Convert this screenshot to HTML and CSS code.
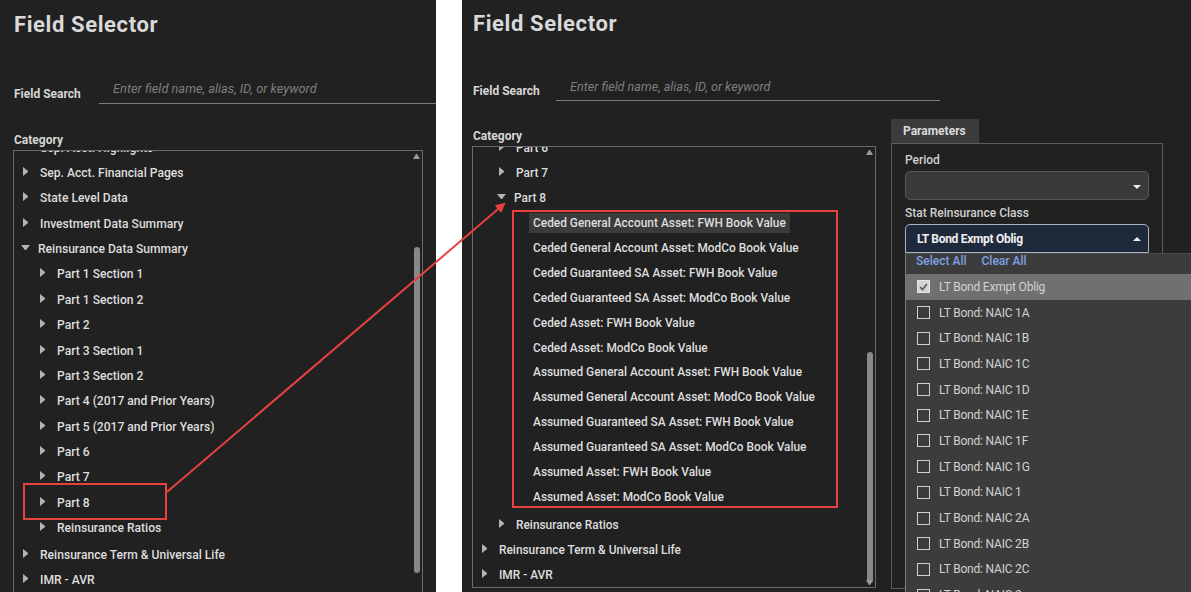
FILE: index.html
```html
<!DOCTYPE html>
<html lang="en">
<head>
<meta charset="utf-8">
<title>Field Selector</title>
<link rel="stylesheet" href="styles.css">
</head>
<body>
<div class="shot">
  <section class="panel panel-left">
    <h1 class="title">Field Selector</h1>
    <div class="search-row">
      <span class="search-label">Field Search</span>
      <div class="search-input">Enter field name, alias, ID, or keyword</div>
    </div>
    <div class="cat-label">Category</div>
    <div class="tree tree-left">
      <ul class="tree-list">
        <li class="row l1"><span class="tw"></span><span class="tx">Sep. Acct. Highlights</span></li>
        <li class="row l1"><span class="tw"></span><span class="tx">Sep. Acct. Financial Pages</span></li>
        <li class="row l1"><span class="tw"></span><span class="tx">State Level Data</span></li>
        <li class="row l1"><span class="tw"></span><span class="tx">Investment Data Summary</span></li>
        <li class="row l1"><span class="tw open"></span><span class="tx">Reinsurance Data Summary</span></li>
        <li class="row l2"><span class="tw"></span><span class="tx">Part 1 Section 1</span></li>
        <li class="row l2"><span class="tw"></span><span class="tx">Part 1 Section 2</span></li>
        <li class="row l2"><span class="tw"></span><span class="tx">Part 2</span></li>
        <li class="row l2"><span class="tw"></span><span class="tx">Part 3 Section 1</span></li>
        <li class="row l2"><span class="tw"></span><span class="tx">Part 3 Section 2</span></li>
        <li class="row l2"><span class="tw"></span><span class="tx">Part 4 (2017 and Prior Years)</span></li>
        <li class="row l2"><span class="tw"></span><span class="tx">Part 5 (2017 and Prior Years)</span></li>
        <li class="row l2"><span class="tw"></span><span class="tx">Part 6</span></li>
        <li class="row l2"><span class="tw"></span><span class="tx">Part 7</span></li>
        <li class="row l2"><span class="tw"></span><span class="tx">Part 8</span></li>
        <li class="row l2 group-end"><span class="tw"></span><span class="tx">Reinsurance Ratios</span></li>
        <li class="row l1"><span class="tw"></span><span class="tx">Reinsurance Term &amp; Universal Life</span></li>
        <li class="row l1"><span class="tw"></span><span class="tx">IMR - AVR</span></li>
        <li class="row l1"><span class="tw"></span><span class="tx">Exhibit of Life Insurance</span></li>
      </ul>
      <span class="sb-up"></span>
      <span class="sb-thumb"></span>
    </div>
  </section>

  <div class="gap"></div>

  <section class="panel panel-right">
    <h1 class="title">Field Selector</h1>
    <div class="search-row">
      <span class="search-label">Field Search</span>
      <div class="search-input">Enter field name, alias, ID, or keyword</div>
    </div>
    <div class="work">
      <div class="cat-col">
        <div class="cat-label">Category</div>
        <div class="tree tree-right">
          <ul class="tree-list">
            <li class="row l2"><span class="tw"></span><span class="tx">Part 6</span></li>
            <li class="row l2"><span class="tw"></span><span class="tx">Part 7</span></li>
            <li class="row l2"><span class="tw open"></span><span class="tx">Part 8</span></li>
            <li class="row l3"><span class="tw none"></span><span class="tx hl">Ceded General Account Asset: FWH Book Value</span></li>
            <li class="row l3"><span class="tw none"></span><span class="tx">Ceded General Account Asset: ModCo Book Value</span></li>
            <li class="row l3"><span class="tw none"></span><span class="tx">Ceded Guaranteed SA Asset: FWH Book Value</span></li>
            <li class="row l3"><span class="tw none"></span><span class="tx">Ceded Guaranteed SA Asset: ModCo Book Value</span></li>
            <li class="row l3"><span class="tw none"></span><span class="tx">Ceded Asset: FWH Book Value</span></li>
            <li class="row l3"><span class="tw none"></span><span class="tx">Ceded Asset: ModCo Book Value</span></li>
            <li class="row l3"><span class="tw none"></span><span class="tx">Assumed General Account Asset: FWH Book Value</span></li>
            <li class="row l3"><span class="tw none"></span><span class="tx">Assumed General Account Asset: ModCo Book Value</span></li>
            <li class="row l3"><span class="tw none"></span><span class="tx">Assumed Guaranteed SA Asset: FWH Book Value</span></li>
            <li class="row l3"><span class="tw none"></span><span class="tx">Assumed Guaranteed SA Asset: ModCo Book Value</span></li>
            <li class="row l3"><span class="tw none"></span><span class="tx">Assumed Asset: FWH Book Value</span></li>
            <li class="row l3 group-end-lg"><span class="tw none"></span><span class="tx">Assumed Asset: ModCo Book Value</span></li>
            <li class="row l2"><span class="tw"></span><span class="tx">Reinsurance Ratios</span></li>
            <li class="row l1"><span class="tw"></span><span class="tx">Reinsurance Term &amp; Universal Life</span></li>
            <li class="row l1"><span class="tw"></span><span class="tx">IMR - AVR</span></li>
          </ul>
          <span class="sb-up"></span>
          <span class="sb-thumb"></span>
          <span class="sb-down"></span>
        </div>
      </div>

      <div class="params">
        <div class="tab">Parameters</div>
        <div class="params-box">
          <div class="p-label">Period</div>
          <div class="select"><span class="caret-down"></span></div>
          <div class="p-label">Stat Reinsurance Class</div>
          <div class="select select-open">
            <span class="sel-text">LT Bond Exmpt Oblig</span>
            <span class="caret-up"></span>
            <div class="menu">
              <div class="menu-actions"><span>Select All</span><span>Clear All</span></div>
              <ul class="menu-list">
                <li class="opt checked"><span class="cb"><svg viewBox="0 0 12 12" width="12" height="12"><path d="M2.5 6.2 L5 8.8 L9.8 2.8" fill="none" stroke="#5b5b5b" stroke-width="1.8"/></svg></span>LT Bond Exmpt Oblig</li>
                <li class="opt"><span class="cb"></span>LT Bond: NAIC 1A</li>
                <li class="opt"><span class="cb"></span>LT Bond: NAIC 1B</li>
                <li class="opt"><span class="cb"></span>LT Bond: NAIC 1C</li>
                <li class="opt"><span class="cb"></span>LT Bond: NAIC 1D</li>
                <li class="opt"><span class="cb"></span>LT Bond: NAIC 1E</li>
                <li class="opt"><span class="cb"></span>LT Bond: NAIC 1F</li>
                <li class="opt"><span class="cb"></span>LT Bond: NAIC 1G</li>
                <li class="opt"><span class="cb"></span>LT Bond: NAIC 1</li>
                <li class="opt"><span class="cb"></span>LT Bond: NAIC 2A</li>
                <li class="opt"><span class="cb"></span>LT Bond: NAIC 2B</li>
                <li class="opt"><span class="cb"></span>LT Bond: NAIC 2C</li>
                <li class="opt"><span class="cb"></span>LT Bond: NAIC 2</li>
              </ul>
            </div>
          </div>
        </div>
      </div>
    </div>
  </section>
</div>

<svg class="annot" width="1191" height="592" viewBox="0 0 1191 592">
  <defs>
    <marker id="head" markerWidth="10" markerHeight="10" refX="8" refY="5" orient="auto" markerUnits="userSpaceOnUse">
      <path d="M0 0 L10 5 L0 10 Z" fill="#e8413f"/>
    </marker>
  </defs>
  <rect x="24" y="484" width="142" height="35" fill="none" stroke="#e8413f" stroke-width="2"/>
  <rect x="513" y="211" width="324" height="296" fill="none" stroke="#e8413f" stroke-width="2"/>
  <line x1="167" y1="492" x2="504" y2="204" stroke="#e8413f" stroke-width="2" marker-end="url(#head)"/>
</svg>
</body>
</html>
```

FILE: styles.css
```css
* { box-sizing: border-box; }

html, body {
  margin: 0;
  padding: 0;
}

body {
  width: 1191px;
  height: 592px;
  overflow: hidden;
  background: #ffffff;
  position: relative;
  font-family: Roboto, "Liberation Sans", Arial, sans-serif;
  color: #dcdcdc;
}

.shot {
  display: flex;
  height: 592px;
}

.panel {
  background: #212121;
  height: 592px;
  overflow: hidden;
  display: flex;
  flex-direction: column;
}

.panel-left {
  width: 436px;
  padding: 13px 0 0 13px;
  --row: 25.36px;
  --fs: 12.1px;
}

.gap {
  width: 26px;
  background: #ffffff;
}

.panel-right {
  flex: 1;
  padding: 12px 0 0 10px;
  --row: 24.9px;
  --fs: 11.9px;
}

.title {
  margin: 0 0 0 1px;
  font-size: 22px;
  line-height: 24px;
  font-weight: 700;
  color: #d9d9d9;
  letter-spacing: 0.6px;
}

.search-row {
  display: flex;
  align-items: flex-end;
  margin-top: 44px;
  padding-left: 1px;
}

.panel-right .search-row { margin-top: 43px; }

.search-label {
  font-size: 12px;
  line-height: 16px;
  font-weight: 700;
  color: #d6d6d6;
  margin-bottom: 2px;
  width: 85px;
  flex: none;
}

.panel-right .search-label { width: 83px; }

.search-input {
  flex: 1;
  height: 23px;
  border-bottom: 1px solid #7a7a7a;
  padding-left: 14px;
  font-size: 12.8px;
  line-height: 16px;
  font-style: italic;
  color: #7e7e7e;
}

.panel-right .search-input {
  flex: none;
  width: 384px;
  height: 22px;
  font-size: 12.6px;
}

.cat-label {
  font-size: 12px;
  line-height: 16px;
  font-weight: 700;
  color: #d6d6d6;
  margin: 28px 0 2px 1px;
}

.tree {
  position: relative;
  border: 1px solid #6a6a6a;
  overflow: hidden;
}

.tree-left {
  width: 410px;
  height: 470px;
  flex: none;
}

.tree-right {
  width: 404px;
  height: 442px;
}

.tree-list {
  list-style: none;
  margin: -16px 0 0 0;
  padding: 0;
}

.tree-right .tree-list { margin-top: -11px; }

.row {
  display: flex;
  align-items: center;
  height: var(--row);
  font-size: var(--fs);
  font-weight: 500;
  color: #dedede;
  white-space: nowrap;
}

.row.l1 { padding-left: 9px; }
.row.l2 { padding-left: 26px; }
.row.l3 { padding-left: 43px; }

.row.group-end { margin-bottom: 1.5px; }
.tree-left .row.l1:nth-last-child(2) { margin-bottom: 1px; }
.row.group-end-lg { margin-bottom: 3px; }

.tw {
  width: 5px;
  height: 9px;
  margin-right: 12px;
  margin-top: -3px;
  flex: none;
  border-left: 5px solid #b3b3b3;
  border-top: 4px solid transparent;
  border-bottom: 4px solid transparent;
}

.tw.open {
  width: 9px;
  height: 5px;
  margin-right: 8px;
  margin-left: -2px;
  margin-top: -4px;
  border-left: 4px solid transparent;
  border-right: 4px solid transparent;
  border-top: 5px solid #b3b3b3;
  border-bottom: 0;
}

.tw.none { border: 0; }

.tx.hl {
  background: #3b3b3b;
  padding: 3px 4px;
  margin-left: -4px;
}

.sb-thumb {
  position: absolute;
  right: 2px;
  width: 6px;
  border-radius: 3px;
  background: #888888;
}

.tree-left .sb-thumb { top: 96px; height: 326px; }
.tree-right .sb-thumb { top: 205px; height: 231px; }

.sb-up, .sb-down {
  position: absolute;
  right: 2px;
  width: 7px;
  height: 5px;
  border-left: 3.5px solid transparent;
  border-right: 3.5px solid transparent;
}

.sb-up { top: 3px; border-bottom: 5px solid #9a9a9a; }
.sb-down { bottom: 2px; border-top: 5px solid #9a9a9a; }

.work {
  display: flex;
  gap: 15px;
}

.panel-right .cat-label { margin-top: 27px; }

.params {
  margin-top: 18px;
  width: 272px;
}

.tab {
  width: 88px;
  height: 24px;
  background: #3b3b3b;
  font-size: 12px;
  line-height: 24px;
  font-weight: 700;
  color: #dadada;
  padding-left: 12px;
}

.params-box {
  border: 1px solid #5c5c5c;
  height: 446px;
  padding: 8px 13px 0 13px;
}

.p-label {
  font-size: 12px;
  line-height: 16px;
  font-weight: 500;
  color: #cfcfcf;
  margin-bottom: 3px;
}

.select {
  position: relative;
  height: 29px;
  border: 1px solid #565656;
  border-radius: 5px;
  background: #3a3a3a;
  margin-bottom: 5px;
}

.select-open {
  background: #1e2a3b;
  border-color: #a9b3c2;
  border-radius: 5px 5px 0 0;
  display: flex;
  align-items: center;
  padding-left: 11px;
}

.sel-text {
  font-size: 12px;
  font-weight: 700;
  color: #f0f0f0;
  letter-spacing: -0.3px;
}

.caret-down, .caret-up {
  position: absolute;
  right: 7px;
  width: 8px;
  height: 4px;
  border-left: 4px solid transparent;
  border-right: 4px solid transparent;
}

.caret-down { top: 13px; border-top: 4px solid #ededed; }
.caret-up { top: 12px; border-bottom: 4px solid #ededed; }

.menu {
  position: absolute;
  left: -1px;
  top: 28px;
  width: 300px;
  background: #3c3c3c;
  border-left: 1px solid #7a7a7a;
  border-top: 1px solid #4a4a4a;
}

.menu-actions {
  display: flex;
  gap: 15px;
  height: 20px;
  line-height: 15px;
  padding-left: 10px;
  font-size: 12px;
  font-weight: 500;
  color: #7fa1e6;
}

.menu-list {
  list-style: none;
  margin: 0;
  padding: 0;
}

.opt {
  display: flex;
  align-items: center;
  height: 25.7px;
  padding-left: 11px;
  font-size: 12px;
  color: #d2d2d2;
  white-space: nowrap;
  letter-spacing: -0.2px;
}

.opt.checked { background: #707070; }

.cb {
  width: 13px;
  height: 13px;
  border: 1.5px solid #cfcfcf;
  margin-right: 9px;
  flex: none;
  display: flex;
  align-items: center;
  justify-content: center;
}

.opt.checked .cb { background: #d4d4d4; border-color: #e6e6e6; }

.annot {
  position: absolute;
  left: 0;
  top: 0;
  pointer-events: none;
}
```
